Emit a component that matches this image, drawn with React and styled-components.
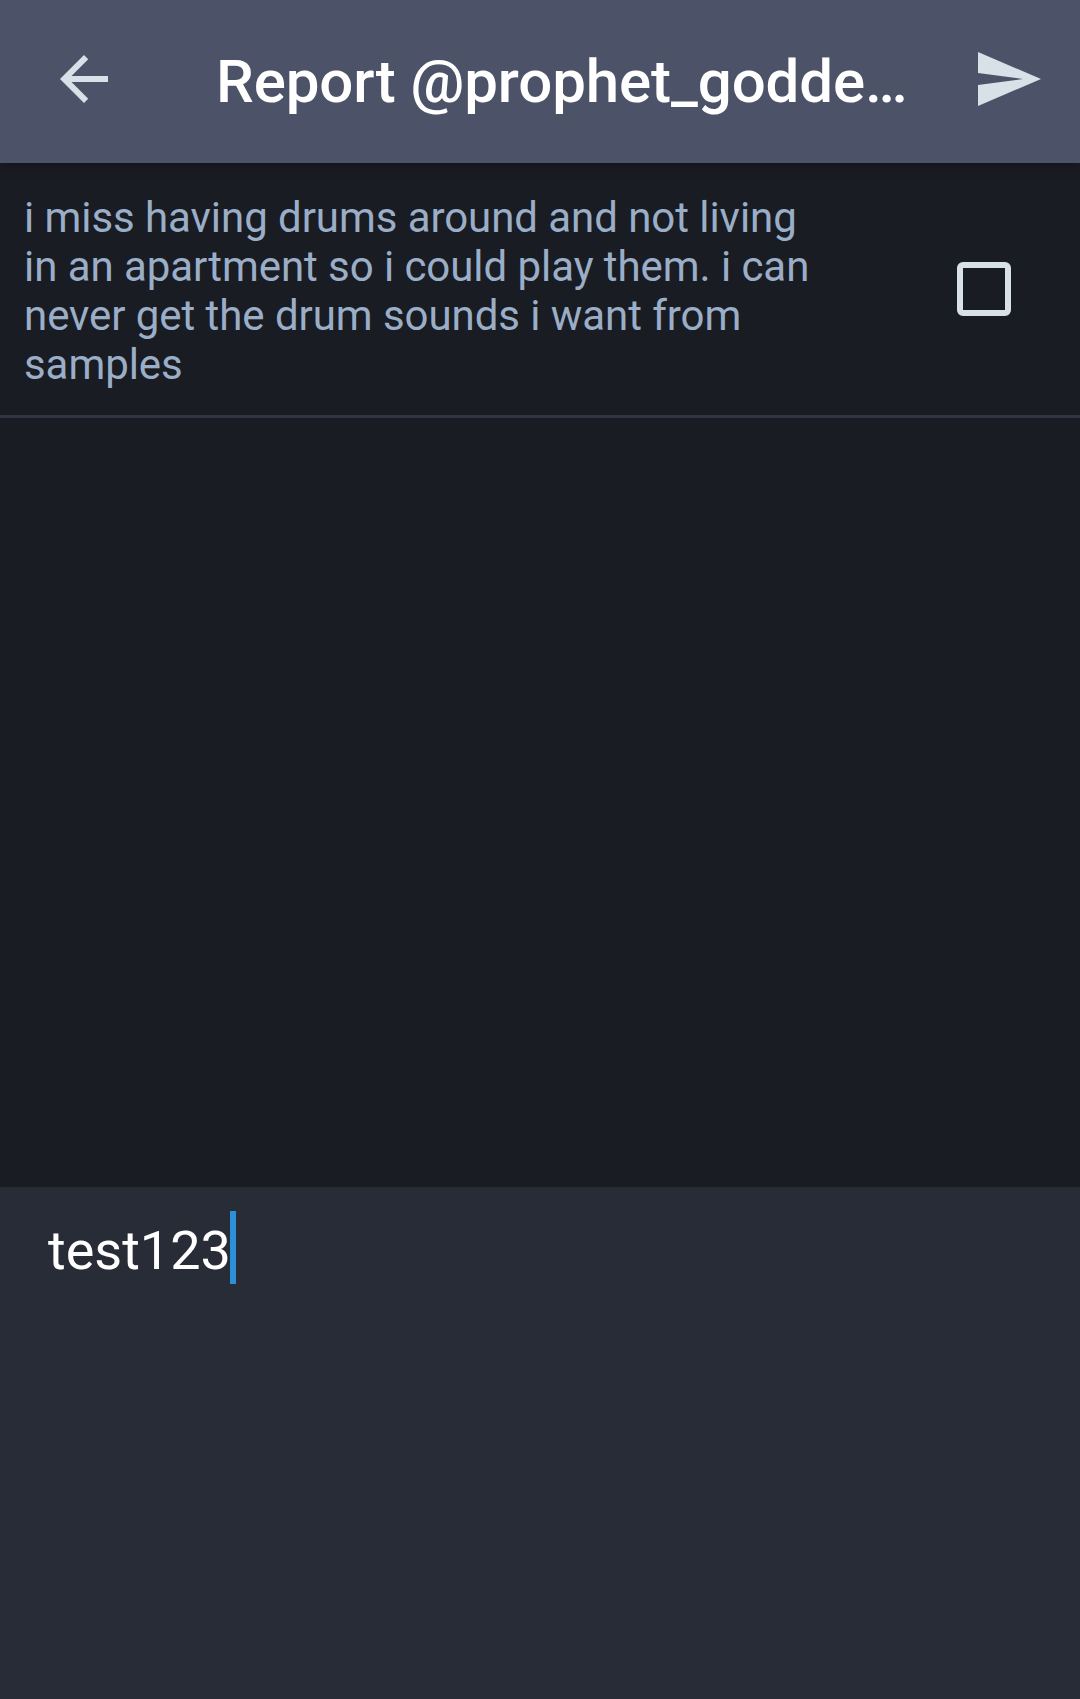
import React from "react";
import styled, { createGlobalStyle } from "styled-components";

const GlobalStyle = createGlobalStyle`
  *, *::before, *::after { box-sizing: border-box; }
  html, body { margin: 0; background: #1a1c23; }
  body { font-family: Roboto, "Noto Sans", sans-serif; }
`;

const Screen = styled.div`
  display: flex;
  flex-direction: column;
  width: 1080px;
  height: 1699px;
  overflow: hidden;
  background: #1a1c23;
`;

const Toolbar = styled.header`
  display: flex;
  align-items: center;
  flex: none;
  height: 163px;
  padding: 0 36px 5px 48px;
  background: #4c5368;
  position: relative;
  box-shadow: 0 3px 12px rgba(0, 0, 0, 0.3);
`;

const IconButton = styled.button`
  flex: none;
  width: 72px;
  height: 72px;
  padding: 0;
  border: 0;
  background: none;
  color: #d9e1e8;

  svg {
    display: block;
    width: 72px;
    height: 72px;
    fill: currentColor;
  }
`;

const Title = styled.h1`
  flex: 1;
  margin: 5px 0 0 96px;
  color: #fff;
  font-size: 60px;
  font-weight: 500;
  line-height: 70px;
  letter-spacing: -0.1px;
  white-space: nowrap;
`;

const StatusRow = styled.label`
  display: flex;
  align-items: center;
  justify-content: space-between;
  flex: none;
  height: 255px;
  padding: 0 69px 0 24px;
  border-bottom: 3px solid #313543;
`;

const StatusText = styled.p`
  width: 810px;
  margin: 0;
  padding-top: 4px;
  color: #9baec8;
  font-size: 42px;
  line-height: 49px;
  letter-spacing: -0.06px;
`;

const Checkbox = styled.input`
  appearance: none;
  flex: none;
  width: 54px;
  height: 54px;
  margin: 0;
  border: 6px solid #d9e1e8;
  border-radius: 6px;
`;

const Statuses = styled.main`
  flex: 1;
`;

const CommentBox = styled.section`
  display: flex;
  align-items: flex-start;
  flex: none;
  height: 512px;
  padding: 24px 48px;
  background: #282c37;
`;

const CommentText = styled.span`
  width: 182px;
  color: #fff;
  font-size: 54px;
  line-height: 73px;
  padding-top: 3px;
`;

const Caret = styled.span`
  width: 6px;
  height: 73px;
  background: #2b90d9;
`;

export default function App() {
  return (
    <>
      <GlobalStyle />
      <Screen>
        <Toolbar>
          <IconButton aria-label="Back">
            <svg viewBox="0 0 24 24">
              <path d="M20 11H7.83l5.59-5.59L12 4l-8 8 8 8 1.41-1.41L7.83 13H20v-2z" />
            </svg>
          </IconButton>
          <Title>Report @prophet_godde…</Title>
          <IconButton aria-label="Send">
            <svg viewBox="0 0 24 24">
              <path d="M2.01 21L23 12 2.01 3 2 10l15 2-15 2z" />
            </svg>
          </IconButton>
        </Toolbar>
        <Statuses>
          <StatusRow>
            <StatusText>
              i miss having drums around and not living
              <br />
              in an apartment so i could play them. i can
              <br />
              never get the drum sounds i want from
              <br />
              samples
            </StatusText>
            <Checkbox type="checkbox" />
          </StatusRow>
        </Statuses>
        <CommentBox>
          <CommentText>test123</CommentText>
          <Caret />
        </CommentBox>
      </Screen>
    </>
  );
}
